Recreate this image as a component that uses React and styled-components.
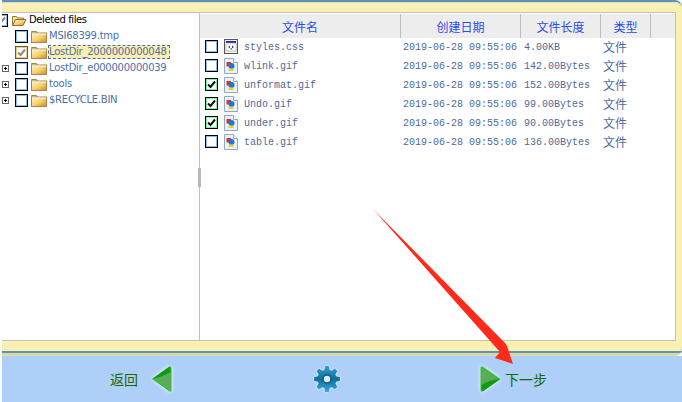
import React from "react";
import styled, { createGlobalStyle } from "styled-components";

const GlobalStyle = createGlobalStyle`
  html, body { margin: 0; padding: 0; background: #fff; }
  body { width: 682px; height: 402px; overflow: hidden; }
`;

const treeItems = [
  { name: "MSI68399.tmp" },
  { name: "LostDir_2000000000048", selected: true },
  { name: "LostDir_e000000000039", expander: true },
  { name: "tools", expander: true },
  { name: "$RECYCLE.BIN", expander: true },
];

const files = [
  { name: "styles.css", size: "4.00KB", type: "css" },
  { name: "wlink.gif", size: "142.00Bytes", type: "gif" },
  { name: "unformat.gif", size: "152.00Bytes", type: "gif", checked: true },
  { name: "Undo.gif", size: "99.00Bytes", type: "gif", checked: true },
  { name: "under.gif", size: "90.00Bytes", type: "gif", checked: true },
  { name: "table.gif", size: "136.00Bytes", type: "gif" },
];

const columns = [
  { title: "文件名", width: 201 },
  { title: "创建日期", width: 120 },
  { title: "文件长度", width: 80 },
  { title: "类型", width: 50 },
  { title: "", width: 23 },
];

const Page = styled.div`
  position: relative;
  width: 682px;
  height: 402px;
  padding-left: 2px;
  box-sizing: border-box;
  background: #fff;
  display: flex;
  flex-direction: column;
  font-family: "Liberation Sans", "Noto Sans CJK SC", sans-serif;
`;

const Frame = styled.div`
  height: 356px;
  box-sizing: border-box;
  background: #d8d8a8;
  padding-bottom: 3px;
  border-top: 2px solid #5f93b5;
  border-radius: 0 7px 7px 0;
  position: relative;
  &:after {
    content: "";
    position: absolute;
    left: 0;
    right: 0;
    bottom: 3px;
    height: 2px;
    background: #5f93b5;
    border-radius: 0 0 7px 0;
  }
`;

const FrameInner = styled.div`
  height: 100%;
  box-sizing: border-box;
  padding: 9px 6px 12px 0;
  background: #fbf0b4;
  border-top: 1px solid #dcdcc8;
  border-radius: 0 7px 7px 0;
`;

const Panels = styled.div`
  height: 100%;
  box-sizing: border-box;
  display: flex;
  background: #fff;
  border: 1px solid #c0c0c0;
  border-left: 0;
`;

const TreePane = styled.div`
  position: relative;
  width: 198px;
  box-sizing: border-box;
  border-right: 1px solid #c0c0c0;
  flex-shrink: 0;
  &:after {
    content: "";
    position: absolute;
    right: -2px;
    top: 155px;
    width: 3px;
    height: 19px;
    background: #b8b8b8;
  }
`;

const TreeClip = styled.div`
  overflow: hidden;
  margin-top: -1px;
`;

const TreeRow = styled.div`
  height: 16px;
  display: flex;
  align-items: center;
  gap: 3px;
  margin-left: ${(p) => p.$indent}px;
  position: relative;
`;

const Expander = styled.span`
  position: absolute;
  left: -13px;
  top: 5px;
  width: 5px;
  height: 5px;
  border: 1px solid #666;
  background: #fff;
  &:before {
    content: "";
    position: absolute;
    left: 1px;
    top: 2px;
    width: 3px;
    height: 1px;
    background: #000;
  }
  &:after {
    content: "";
    position: absolute;
    left: 2px;
    top: 1px;
    width: 1px;
    height: 3px;
    background: #000;
  }
`;

const Check = styled.span`
  width: 9px;
  height: 9px;
  flex-shrink: 0;
  display: inline-flex;
  align-items: center;
  justify-content: center;
  background: #fff;
  border: 1px solid ${(p) => (p.$tone === "sel" ? "#6b5a28" : "#000")};
  box-shadow: inset 0 0 0 1px ${(p) =>
    p.$tone === "sel" ? "#e6cf8a" : p.$tone === "on" ? "#7ef09a" : "#8cbcf0"};
  padding: 1px;
`;

const TreeLabel = styled.span`
  font-family: "DejaVu Sans", sans-serif;
  font-size: 10px;
  letter-spacing: ${(p) => (p.$root ? "-0.4px" : "-0.25px")};
  line-height: 14px;
  padding: ${(p) => (p.$selected ? "0 3px 0 1px" : "0 1px")};
  margin-left: -2px;
  white-space: nowrap;
  color: ${(p) => (p.$root ? "#000" : "#4e6ea8")};
  background: ${(p) => (p.$selected ? "#fbeeb0" : "transparent")};
  outline: ${(p) => (p.$selected ? "1px dashed #4e6ea8" : "none")};
  outline-offset: -1px;
`;

const FilePane = styled.div`
  flex: 1;
  min-width: 0;
  overflow: hidden;
  padding-top: 1px;
`;

const HeaderRow = styled.div`
  display: grid;
  grid-template-columns: ${columns.map((c) => c.width + "px").join(" ")};
  height: 24px;
  background: #ededed;
`;

const HeaderCell = styled.div`
  display: flex;
  align-items: center;
  justify-content: center;
  box-sizing: border-box;
  color: #2b4ce6;
  font-size: 12px;
  border-right: 1px solid #bdbdbd;
  &:last-child { border-right: 0; }
`;

const FileRow = styled.div`
  display: grid;
  grid-template-columns: 201px 120px 80px 50px;
  height: 19px;
  align-items: center;
  color: #4e6a9c;
  font-family: "Liberation Mono", "Noto Sans CJK SC", monospace;
  font-size: 10px;
`;

const NameCell = styled.div`
  display: flex;
  align-items: center;
  padding-left: 5px;
  gap: 6px;
`;

const RowCheck = styled(Check)`
  margin-bottom: 2px;
`;

const IconSlot = styled.span`
  display: inline-flex;
  margin-bottom: 2px;
`;

const DateCell = styled.div`
  padding-left: 2px;
`;

const SizeCell = styled.div`
  padding-left: 3px;
`;

const TypeCell = styled.div`
  font-family: "Noto Sans CJK SC", sans-serif;
  font-size: 12px;
  line-height: 16px;
  padding-left: 2px;
  margin-top: -2px;
`;

const Footer = styled.div`
  flex: 1;
  display: flex;
  align-items: center;
  background: #aecff7;
  padding-left: 108px;
  color: #1c6600;
  font-size: 14px;
`;

const FootLabel = styled.span`
  font-family: "Noto Sans CJK SC", sans-serif;
  width: ${(p) => p.$width}px;
  margin-left: ${(p) => p.$gap || 0}px;
`;

const GearWrap = styled.span`
  display: inline-flex;
  margin: 0 139px 0 141px;
  filter: drop-shadow(0 0 1px rgba(255, 255, 255, 0.8));
`;

const ArrowWrap = styled.span`
  display: inline-flex;
  filter: drop-shadow(0 0 2px rgba(255, 255, 255, 0.9));
`;

const Overlay = styled.svg`
  position: absolute;
  left: 0;
  top: 0;
  pointer-events: none;
`;

function Folder({ open }) {
  return (
    <svg width="16" height="13" viewBox="0 0 16 13" style={{ flexShrink: 0 }}>
      <defs>
        <linearGradient id="folderFill" x1="0" y1="0" x2="1" y2="1">
          <stop offset="0" stopColor="#fff6c8" />
          <stop offset="0.55" stopColor="#f6cf6a" />
          <stop offset="1" stopColor="#c98a1e" />
        </linearGradient>
      </defs>
      {open ? (
        <>
          <path d="M1.5 11.5V2.5h4l1 1.5h6v2" fill="#f8e2a0" stroke="#9a7a3a" />
          <path d="M1.5 11.5l3-6h10.5l-3 6z" fill="url(#folderFill)" stroke="#8f6f2f" />
        </>
      ) : (
        <>
          <path d="M.5 2.5V1.5h5l1 1.5" fill="#f8e2a0" stroke="#a08850" />
          <rect x=".5" y="3" width="15" height="9.5" fill="url(#folderFill)" stroke="#a08850" />
          <path d="M1 4h14" stroke="#fff" strokeOpacity=".8" />
        </>
      )}
    </svg>
  );
}

function FileIcon({ type }) {
  if (type === "css") {
    return (
      <svg width="14" height="15" viewBox="0 0 14 15">
        <rect x=".5" y=".5" width="13" height="14" fill="#f2efe6" stroke="#555" />
        <rect x="2" y="2" width="10" height="2" fill="#2030a0" />
        <rect x="2" y="4" width="10" height="8" fill="#fff" stroke="#888" strokeWidth=".5" />
        <path d="M4 8l2-1.5v3z" fill="#d02020" />
        <path d="M10 8L8 6.5v3z" fill="#2040c0" />
        <rect x="6.5" y="9" width="1.5" height="1.5" fill="#20a040" />
      </svg>
    );
  }
  return (
    <svg width="14" height="16" viewBox="0 0 14 16">
      <path d="M.5.5h9l4 4v11H.5z" fill="#eaf2fc" stroke="#8fa8c8" />
      <path d="M9.5.5v4h4" fill="#fff" stroke="#8fa8c8" />
      <rect x="2.5" y="4" width="4.5" height="4.5" fill="#e83018" />
      <circle cx="7.5" cy="8" r="3" fill="#1878e0" />
      <rect x="4.5" y="10.5" width="5" height="2.5" fill="#f0d020" />
    </svg>
  );
}

function Tick({ color }) {
  return (
    <svg width="9" height="9" viewBox="0 0 9 9">
      <path d="M1 4.5l2.5 2.5L8 1.5" fill="none" stroke={color} strokeWidth="2" />
    </svg>
  );
}

const gearPath = (() => {
  const teeth = 8;
  const pts = [];
  for (let i = 0; i < teeth; i++) {
    const a = (i / teeth) * Math.PI * 2;
    const step = (Math.PI * 2) / teeth;
    [
      [9.5, -0.36],
      [13, -0.16],
      [13, 0.16],
      [9.5, 0.36],
    ].forEach(([r, f]) => {
      const t = a + f * step;
      pts.push((13 + r * Math.sin(t)).toFixed(2) + " " + (13 - r * Math.cos(t)).toFixed(2));
    });
  }
  return "M" + pts.join("L") + "Z";
})();

function Gear() {
  return (
    <svg width="26" height="26" viewBox="0 0 26 26">
      <defs>
        <linearGradient id="gearFill" x1="0" y1="0" x2="0" y2="1">
          <stop offset="0" stopColor="#2f9fd0" />
          <stop offset="0.5" stopColor="#0f6f9f" />
          <stop offset="1" stopColor="#38a8d8" />
        </linearGradient>
      </defs>
      <path d={gearPath} fill="url(#gearFill)" />
      <circle cx="13" cy="13" r="4" fill="#dcecf6" stroke="#0b5c88" strokeWidth="1.6" />
    </svg>
  );
}

function TriangleLeft() {
  return (
    <svg width="23" height="28" viewBox="0 0 23 28">
      <path d="M2 14L19.5 1.5Q21.5 1 21.5 3V25Q21.5 27 19.5 26.5z" fill="#30c030" />
      <path d="M4 14Q14 12 20.5 7V25.5z" fill="#5cab5c" />
      <path d="M2 14L19.5 1.5Q21 4 20.5 7Q12 12 2 14z" fill="#129a12" />
    </svg>
  );
}

function TriangleRight() {
  return (
    <svg width="23" height="28" viewBox="0 0 23 28">
      <path d="M21.5 14L3.5 1.5Q1.5 1 1.5 3V25Q1.5 27 3.5 26.5z" fill="#30c030" />
      <path d="M19 14L2.5 3V20Q10 15 19 14z" fill="#5cab5c" />
      <path d="M21.5 14Q10 15 2.5 20Q2 24 3.5 26.5z" fill="#129a12" />
    </svg>
  );
}

export default function App() {
  return (
    <Page>
      <GlobalStyle />
      <Frame>
        <FrameInner>
          <Panels>
            <TreePane>
              <TreeClip>
                <TreeRow $indent={-7}>
                  <Check $tone="off"><Tick color="#888" /></Check>
                  <Folder open />
                  <TreeLabel $root>Deleted files</TreeLabel>
                </TreeRow>
                {treeItems.map((item) => (
                  <TreeRow $indent={13} key={item.name}>
                    {item.expander && <Expander />}
                    <Check $tone={item.selected ? "sel" : "off"}>
                      {item.selected && <Tick color="#888" />}
                    </Check>
                    <Folder />
                    <TreeLabel $selected={item.selected}>{item.name}</TreeLabel>
                  </TreeRow>
                ))}
              </TreeClip>
            </TreePane>
            <FilePane>
              <HeaderRow>
                {columns.map((c, i) => (
                  <HeaderCell key={i}>{c.title}</HeaderCell>
                ))}
              </HeaderRow>
              {files.map((f) => (
                <FileRow key={f.name}>
                  <NameCell>
                    <RowCheck $tone={f.checked ? "on" : "off"}>
                      {f.checked && <Tick color="#111" />}
                    </RowCheck>
                    <IconSlot><FileIcon type={f.type} /></IconSlot>
                    <span>{f.name}</span>
                  </NameCell>
                  <DateCell>2019-06-28 09:55:06</DateCell>
                  <SizeCell>{f.size}</SizeCell>
                  <TypeCell>文件</TypeCell>
                </FileRow>
              ))}
            </FilePane>
          </Panels>
        </FrameInner>
      </Frame>
      <Footer>
        <FootLabel $width={40}>返回</FootLabel>
        <ArrowWrap><TriangleLeft /></ArrowWrap>
        <GearWrap><Gear /></GearWrap>
        <ArrowWrap><TriangleRight /></ArrowWrap>
        <FootLabel $width={50} $gap={3}>下一步</FootLabel>
      </Footer>
      <Overlay width="682" height="402" viewBox="0 0 682 402">
        <path d="M373 209L505 343L507 346L513 364L495 358L500 352Z" fill="#ff2a1a" />
      </Overlay>
    </Page>
  );
}
